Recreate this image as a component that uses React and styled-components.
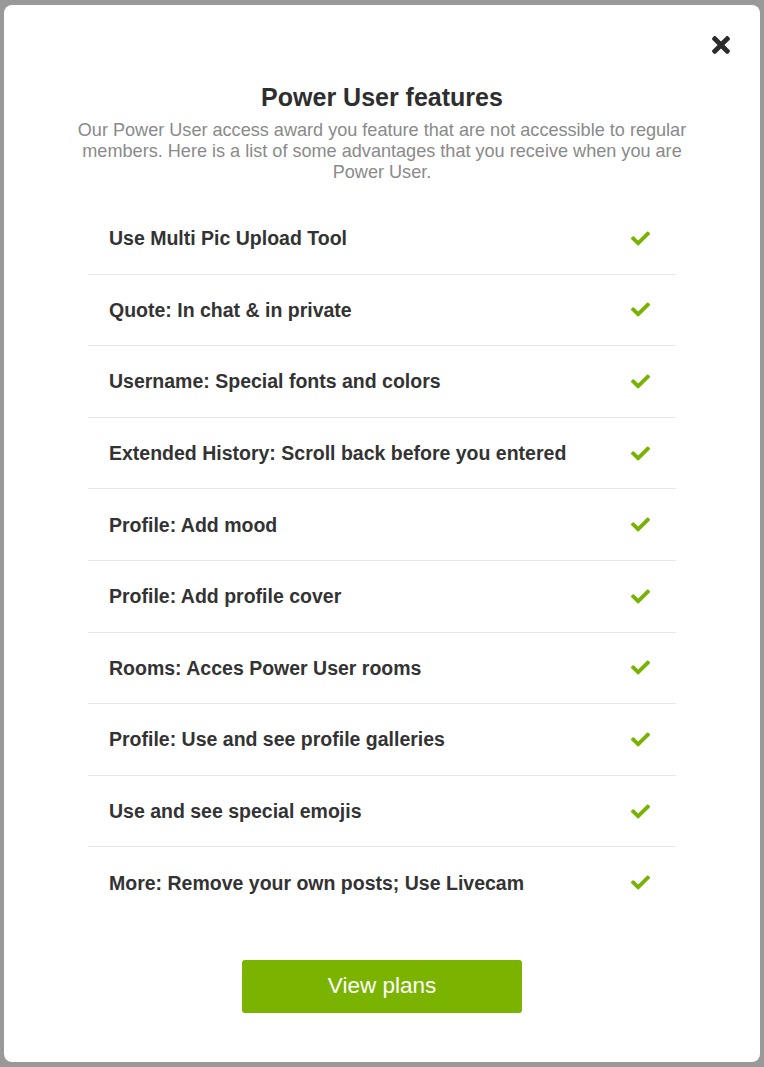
import React from "react";
import styled, { createGlobalStyle } from "styled-components";
import { FaTimes, FaCheck } from "react-icons/fa";

const GlobalStyle = createGlobalStyle`
  html, body {
    margin: 0;
    padding: 0;
    background: #999999;
    font-family: "Liberation Sans", Arial, sans-serif;
  }
`;

const Overlay = styled.div`
  padding: 5px 4px;
  box-sizing: border-box;
  min-height: 1067px;
`;

const Modal = styled.div`
  position: relative;
  background: #ffffff;
  border-radius: 8px;
  height: 1057px;
  box-sizing: border-box;
  padding-top: 77px;
  display: flex;
  flex-direction: column;
  align-items: center;
`;

const Close = styled.button`
  position: absolute;
  top: 27px;
  right: 26px;
  background: none;
  border: none;
  padding: 0;
  color: #2b2b2b;
  font-size: 26px;
  line-height: 0;
  cursor: pointer;
`;

const Title = styled.h2`
  margin: 0;
  font-size: 25px;
  line-height: 30px;
  font-weight: bold;
  color: #2e2e2e;
`;

const Intro = styled.p`
  margin: 8px 0 0;
  max-width: 640px;
  text-align: center;
  font-size: 18.1px;
  line-height: 21px;
  color: #8a8a8a;
`;

const List = styled.ul`
  list-style: none;
  margin: 20px 0 0;
  padding: 0;
  width: 588px;
`;

const Row = styled.li`
  display: flex;
  align-items: center;
  justify-content: space-between;
  min-height: 70.6px;
  padding: 0 26px 0 21px;
  font-size: 19.5px;
  line-height: 22px;
  font-weight: bold;
  color: #333333;
  border-bottom: ${(p) => (p.last ? "none" : "1px solid #e8e8e8")};
`;

const Tick = styled.span`
  color: #77b300;
  font-size: 19px;
  line-height: 0;
`;

const PlansButton = styled.button`
  margin-top: 42px;
  width: 280px;
  height: 53px;
  border: none;
  border-radius: 3px;
  background: #7ab300;
  color: #ffffff;
  font-family: "Liberation Sans", Arial, sans-serif;
  font-size: 22.5px;
  cursor: pointer;
`;

const features = [
  "Use Multi Pic Upload Tool",
  "Quote: In chat & in private",
  "Username: Special fonts and colors",
  "Extended History: Scroll back before you entered",
  "Profile: Add mood",
  "Profile: Add profile cover",
  "Rooms: Acces Power User rooms",
  "Profile: Use and see profile galleries",
  "Use and see special emojis",
  "More: Remove your own posts; Use Livecam",
];

export default function App() {
  return (
    <>
      <GlobalStyle />
      <Overlay>
        <Modal>
          <Close aria-label="Close">
            <FaTimes />
          </Close>
          <Title>Power User features</Title>
          <Intro>
            Our Power User access award you feature that are not accessible to
            regular members. Here is a list of some advantages that you receive
            when you are Power User.
          </Intro>
          <List>
            {features.map((f, i) => (
              <Row key={f} last={i === features.length - 1}>
                {f}
                <Tick>
                  <FaCheck />
                </Tick>
              </Row>
            ))}
          </List>
          <PlansButton>View plans</PlansButton>
        </Modal>
      </Overlay>
    </>
  );
}
